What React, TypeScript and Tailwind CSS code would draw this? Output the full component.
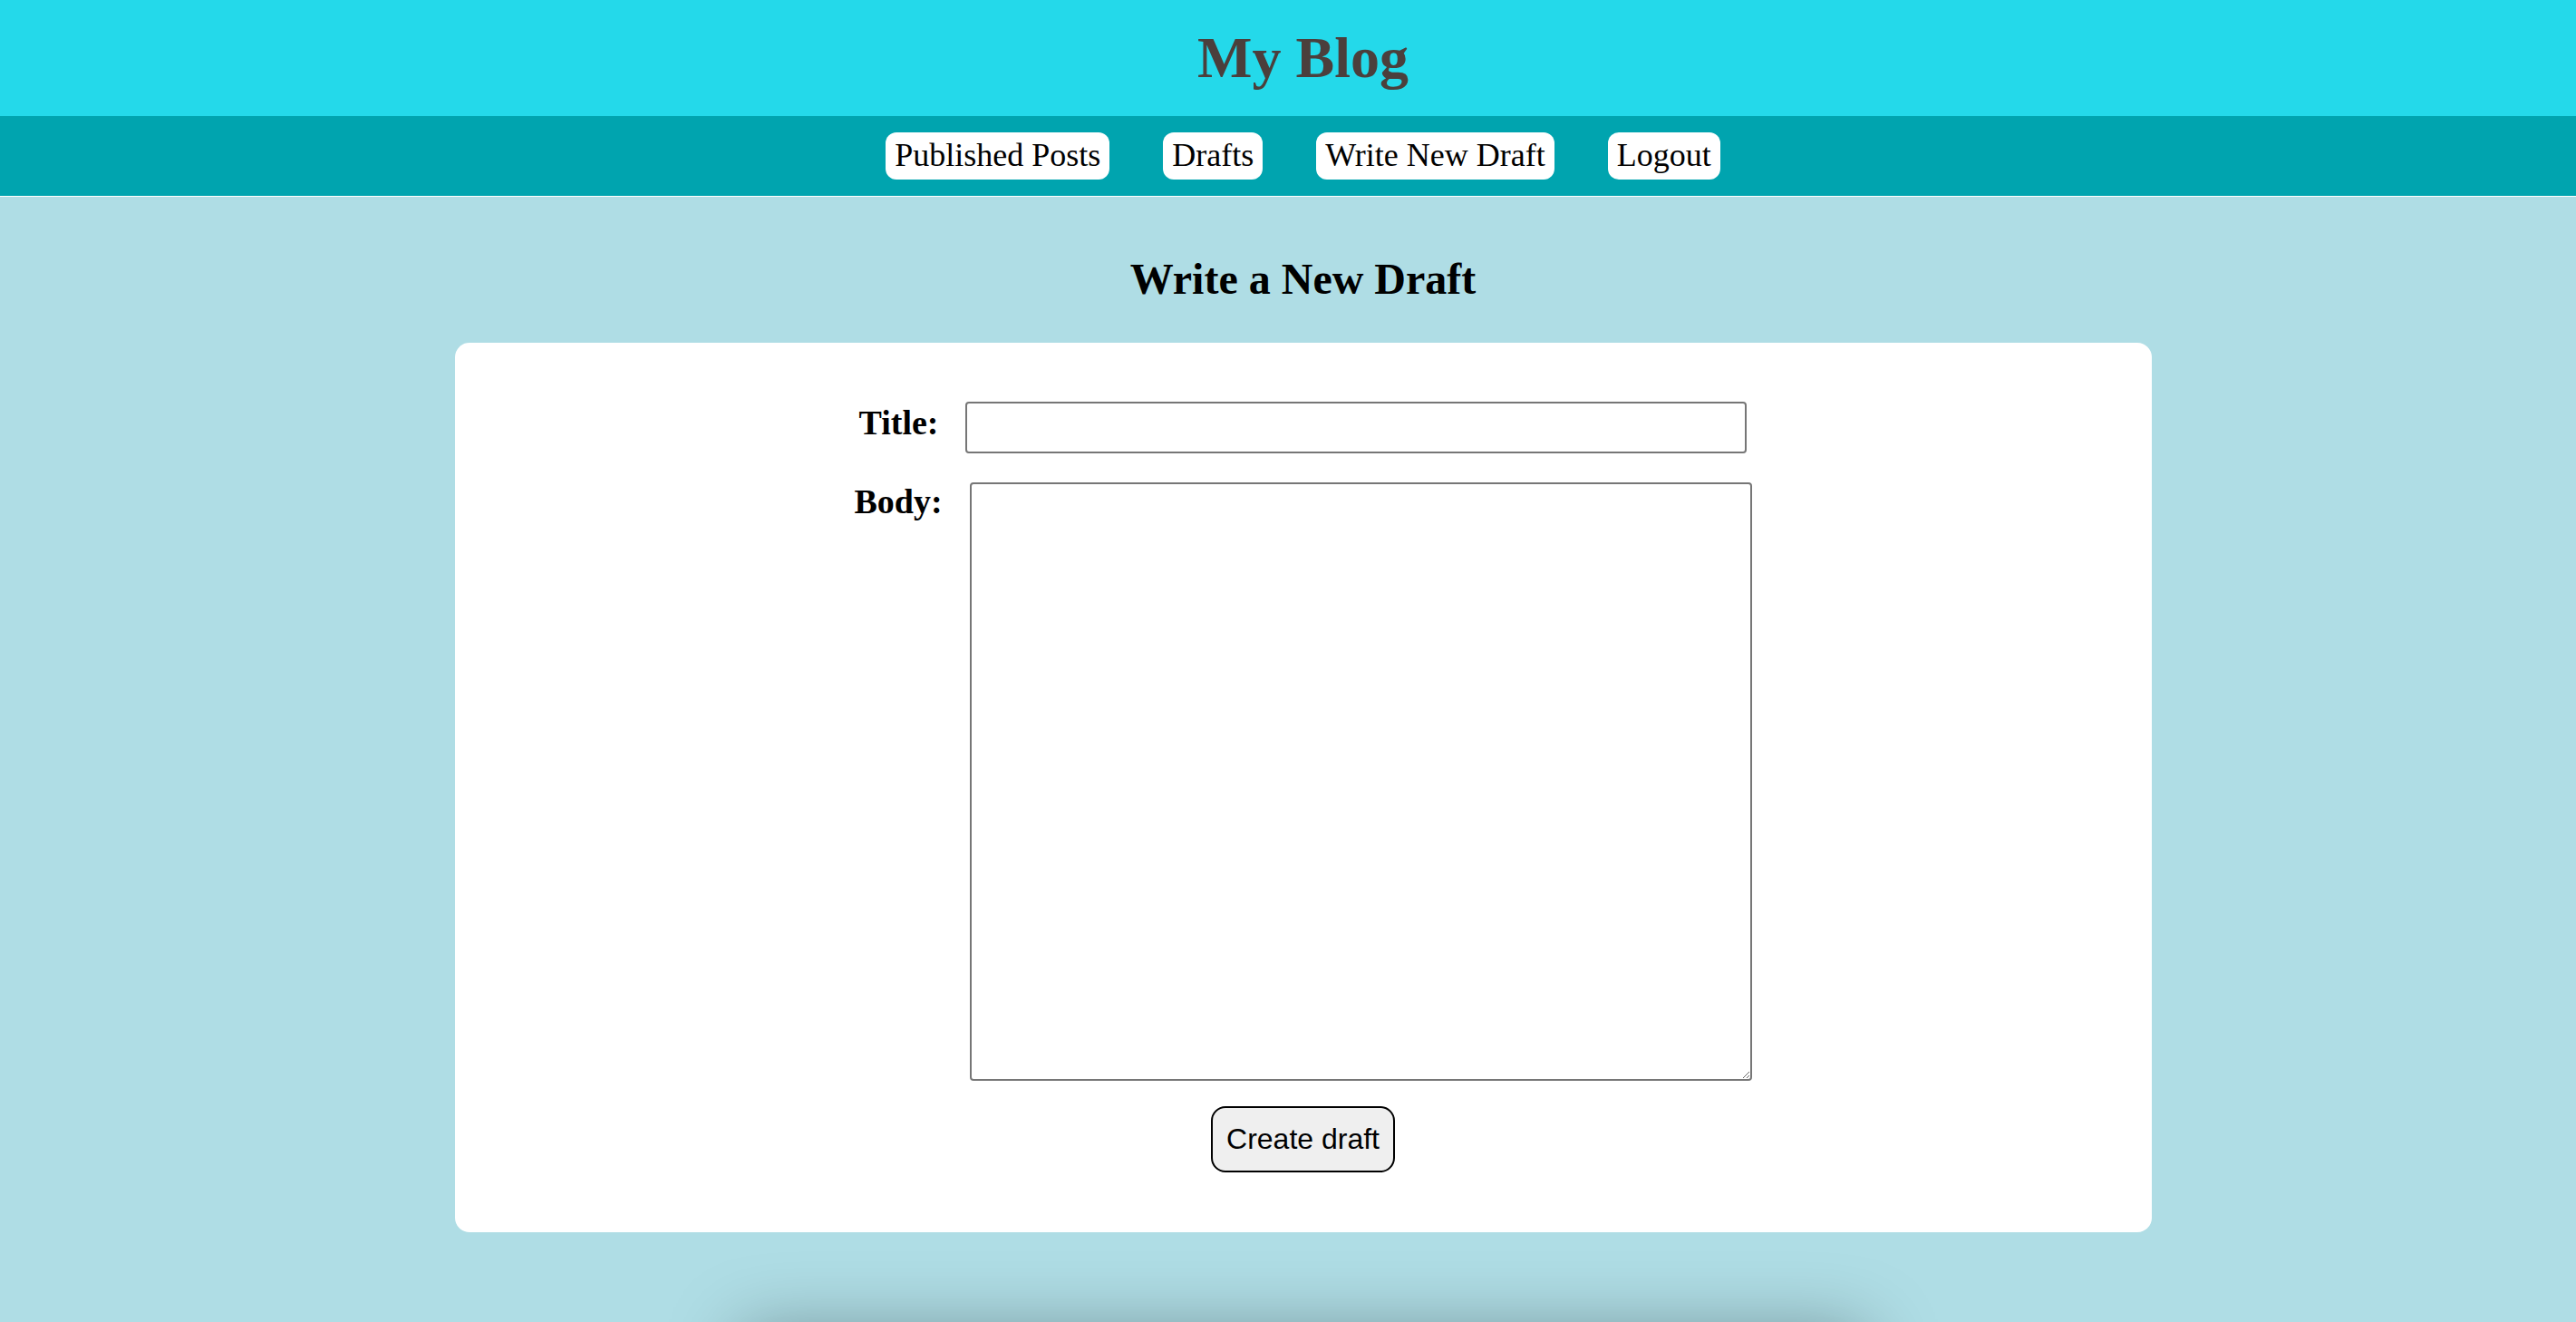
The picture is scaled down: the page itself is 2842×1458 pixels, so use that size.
export default function App() {
  const links = ["Published Posts", "Drafts", "Write New Draft", "Logout"];

  return (
    <div className="h-[1458px] overflow-hidden bg-[#afdde5] font-['Liberation_Serif','Times_New_Roman',serif] text-black">
      <header className="h-[128px] bg-[#24d9ea] pl-[33px] flex items-center justify-center">
        <h1 className="text-[64px] font-bold leading-[1.15] text-[#4b3f3c]">My Blog</h1>
      </header>

      <nav className="h-[89px] bg-[#00a4af] border-b border-white pl-[33px] flex items-center justify-center gap-[59px]">
        {links.map((label) => (
          <a
            key={label}
            href="#"
            className="bg-white rounded-[12px] px-[10px] py-[5px] text-[36px] leading-[1.15] text-black"
          >
            {label}
          </a>
        ))}
      </nav>

      <main className="pl-[33px] flex flex-col items-center">
        <h2 className="mt-[63px] text-[48px] font-bold leading-[1.15]">Write a New Draft</h2>

        <form className="mt-[43px] w-[1872px] bg-white rounded-[16px] pt-[65px] pb-[66px] flex flex-col items-center">
          <div className="flex items-start gap-[30px]">
            <label className="mt-[2px] text-[38px] font-bold leading-[1.15]">Title:</label>
            <input
              type="text"
              className="w-[862px] h-[57px] border-2 border-[#767676] rounded-[4px] bg-white px-2 text-[30px]"
            />
          </div>

          <div className="mt-[32px] flex items-start gap-[30px]">
            <label className="text-[38px] font-bold leading-[1.15]">Body:</label>
            <textarea className="w-[863px] h-[660px] border-2 border-[#767676] rounded-[4px] bg-white p-2 text-[30px]" />
          </div>

          <button
            type="button"
            className="mt-[28px] border-2 border-black rounded-[16px] bg-[#efefef] px-[15px] py-[16px] text-[32px] leading-[1.15] font-['Liberation_Sans',Arial,sans-serif]"
          >
            Create draft
          </button>
        </form>

        <div className="mt-[109px] w-[1240px] h-[200px] bg-[#afdde5] shadow-[0_0_80px_rgba(0,0,0,0.35)]" />
      </main>
    </div>
  );
}
